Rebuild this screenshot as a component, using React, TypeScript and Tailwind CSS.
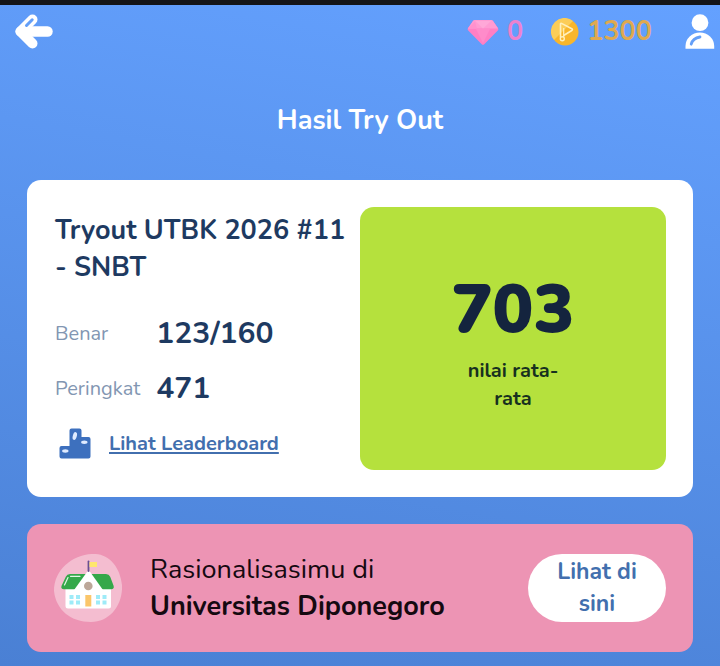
function BackIcon() {
  return (
    <svg viewBox="0 0 40 36" className="h-9 w-10" aria-hidden="true">
      <path d="M33.500 17.500H9" stroke="#fff" strokeWidth="10.500" strokeLinecap="round" />
      <path d="M6.500 17.500 18.500 29.500" stroke="#fff" strokeWidth="10" strokeLinecap="round" />
      <path d="M6.500 17.500 18.500 5.500" stroke="#fff" strokeWidth="10" strokeLinecap="round" />
      <path d="M12.500 11.500 18.200 5.800" stroke="#649ff8" strokeWidth="3" strokeLinecap="round" />
    </svg>
  );
}

function GemIcon() {
  return (
    <svg viewBox="0 0 32 28" className="h-7 w-8" aria-hidden="true">
      <path d="M8 2h16q1.200 0 2 1l5 7q.8 1.200 0 2.200L17.500 26q-1.500 1.700-3 0L1 12.200q-.8-1 0-2.200l5-7q.8-1 2-1Z" fill="#ff7fc4" />
      <path d="M8 2h16q1.200 0 2 1l5 7.500H1L6 3q.8-1 2-1Z" fill="#ff9bd2" />
      <path d="M8.500 3 16 10.500 24 3Z" fill="#ffa8d8" />
      <path d="M9 11h14l-7 14Z" fill="#ff8bca" />
      <path d="m1 10.500 7-7 2 7Z" fill="#ff91cd" />
    </svg>
  );
}

function CoinIcon() {
  return (
    <svg viewBox="0 0 28 28" className="size-7" aria-hidden="true">
      <circle cx="14" cy="14" r="13.500" fill="#f9b62b" />
      <path d="M3 22A13.500 13.500 0 0 1 22 3Z" fill="#fccd58" />
      <path d="M9.500 19V6q0-1 1-.6l10.300 5.300q1.300.9 0 1.800L13 17.300" fill="none" stroke="#fff0bd" strokeWidth="1.600" strokeLinecap="round" strokeLinejoin="round" />
      <path d="M12.700 10v9" stroke="#fff0bd" strokeWidth="1.200" />
      <circle cx="11.300" cy="20.800" r="2" fill="#f9b62b" stroke="#fff0bd" strokeWidth="1.400" />
    </svg>
  );
}

function UserIcon() {
  return (
    <svg viewBox="0 0 30 36" className="h-9 w-[30px]" aria-hidden="true">
      <circle cx="15" cy="8.700" r="8.400" fill="#fff" />
      <path d="M.5 34.800V32a14.300 13.500 0 0 1 28.700 0v2.800Z" fill="#fff" />
      <path d="M6.200 30.200q1.600-6 8.800-7.200" fill="none" stroke="#649ff8" strokeWidth="2.800" strokeLinecap="round" />
    </svg>
  );
}

function PodiumIcon() {
  return (
    <svg viewBox="0 0 32 32" className="size-8" aria-hidden="true">
      <path d="M10.500 2.500q0-2 2-2h8q2 0 2 2V9h7q2 0 2 2v17.500q0 2-2 2h-27q-2 0-2-2V20q0-2 2-2h8Z" fill="#3d70be" />
      <ellipse cx="15.800" cy="8" rx="2" ry="4" fill="#dfebff" transform="rotate(15 15.800 8)" />
      <ellipse cx="25.300" cy="14.300" rx="3.200" ry="1.700" fill="#dfebff" />
      <ellipse cx="6.300" cy="23" rx="3.200" ry="1.700" fill="#dfebff" />
    </svg>
  );
}

function SchoolIcon() {
  return (
    <svg viewBox="0 0 68 68" className="size-[68px] shrink-0" aria-hidden="true">
      <path d="M38 0C54-1 66 12 68 31 69 51 56 68 37 68 17 68 2 56 0 37 0 16 18 1 38 0Z" fill="#f4bdd0" />
      <path d="M11.500 32h45.500v20q0 2.500-2.500 2.500H14q-2.500 0-2.500-2.500Z" fill="#fff" />
      <path d="M16 20h36q3 0 4.200 2.800l3.400 9q1 3.400-2.600 3.400H10q-3.600 0-2.400-3.400l4.200-9Q13 20 16 20Z" fill="#35a84a" />
      <path d="M10.500 31 14 23.500M16.500 22.300H26" stroke="#e2f8e5" strokeWidth="1.200" strokeLinecap="round" />
      <path d="M33 18q1.600-2 3.200 0L49 36v16H20V36Z" fill="#fff" />
      <path d="M34.500 7.500v9.500" stroke="#694f91" strokeWidth="1.800" strokeLinecap="round" />
      <path d="M35.500 8H43v5h-7.500Z" fill="#ffe66c" />
      <circle cx="34.300" cy="32" r="4.300" fill="#bca799" />
      <path d="M31.300 41h6v11.500h-6Z" fill="#fbc66a" />
      <path d="M15.500 41h4v4h-4Zm6.500 0h4v4h-4Zm-6.500 5.600h4v4h-4Zm6.500 0h4v4h-4ZM42 41h4v4h-4Zm6.500 0h4v4h-4Zm-6.500 5.600h4v4h-4Zm6.500 0h4v4h-4Z" fill="#9eebf8" />
    </svg>
  );
}

export default function App() {
  return (
    <div className="min-h-screen border-t-[5px] border-[#141518] bg-linear-[190deg,#64a1ff,#4a80d4] font-['Nunito','Open_Sans',sans-serif]">
      <header className="flex h-[54px] items-center justify-between pr-[5px] pl-3.5">
        <button type="button" aria-label="Kembali">
          <BackIcon />
        </button>
        <div className="flex items-center text-[27px] leading-9 font-bold">
          <GemIcon />
          <span className="ml-2 text-[#ed82ce]">0</span>
          <span className="ml-7">
            <CoinIcon />
          </span>
          <span className="ml-2 text-[#dfa950]">1300</span>
          <button type="button" aria-label="Profil" className="ml-[33px]">
            <UserIcon />
          </button>
        </div>
      </header>

      <h1 className="mt-11 text-center text-[27px] leading-9 font-bold text-white">Hasil Try Out</h1>

      <main className="mt-[41px] flex flex-col gap-[27px] px-[27px] pb-3.5">
        <section className="grid grid-cols-2 rounded-[14px] bg-white p-[27px] text-[#1e3a61]">
          <div className="flex flex-col pt-[5px] pl-px">
            <h2 className="text-[27px] leading-[37px] font-bold">Tryout UTBK 2026 #11 - SNBT</h2>
            <dl className="mt-5 grid grid-cols-[auto_1fr] gap-x-4">
              <dt className="text-[20px] leading-[55px] text-[#8296b2]">Benar</dt>
              <dd className="text-[30px] leading-[55px] font-bold">123/160</dd>
              <dt className="text-[20px] leading-[55px] text-[#8296b2]">Peringkat</dt>
              <dd className="text-[30px] leading-[55px] font-bold">471</dd>
            </dl>
            <a href="#leaderboard" className="mt-3 flex items-center gap-[18px] pl-1 text-[20px] leading-8 font-bold text-[#426fae]">
              <PodiumIcon />
              <span className="underline decoration-2 underline-offset-2">Lihat Leaderboard</span>
            </a>
          </div>
          <div className="flex min-h-[263px] flex-col items-center justify-center rounded-[14px] bg-[#b5e13d] pt-1 text-center">
            <p className="text-[68px] leading-[82px] font-black text-[#14243e]">703</p>
            <p className="mt-1.5 w-28 text-[20px] leading-7 font-bold text-[#17301f]">nilai rata-rata</p>
          </div>
        </section>

        <section className="flex items-center rounded-[14px] bg-[#ed94b4] px-[27px] py-[27px]">
          <SchoolIcon />
          <p className="ml-7 flex-1 text-[27px] leading-[37px] text-[#150910]">
            <span className="block">Rasionalisasimu di</span>
            <strong className="block font-bold">Universitas Diponegoro</strong>
          </p>
          <button type="button" className="w-[138px] rounded-full bg-white px-5 py-0.5 text-[23px] leading-8 font-bold text-[#426fae]">
            Lihat di sini
          </button>
        </section>
      </main>
    </div>
  );
}
